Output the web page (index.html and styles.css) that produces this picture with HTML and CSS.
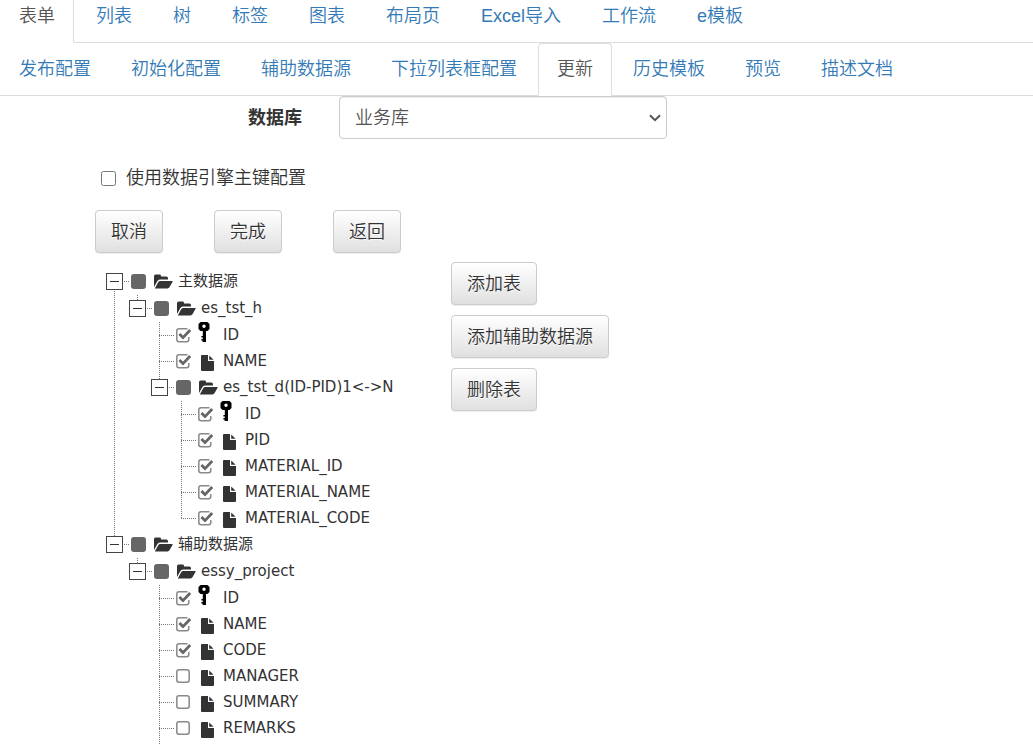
FILE: index.html
```html
<!DOCTYPE html>
<html lang="zh-CN">
<head>
    <meta charset="UTF-8">
    <meta name="viewport" content="width=device-width, initial-scale=1.0">
    <title>更新</title>
    <link rel="stylesheet" href="styles.css">
</head>
<body>
    <!-- 图标 -->
    <svg class="hidden">
        <symbol id="folder" viewBox="0 0 19 15">
            <path d="M0 13V2.2Q0 .6 1.6 .6H5.6Q7 .6 7 2V2.6H12.4Q14 2.6 14 4.2V5.4H6.4Q4.6 5.4 3.6 6.8Z" fill="#333"/>
            <path d="M.8 14.4L4.2 8.2Q4.8 7 6.4 7H18.2Q19 7 18.6 7.8L15.6 13Q14.8 14.4 13.4 14.4Z" fill="#333"/>
        </symbol>
        <symbol id="file" viewBox="0 0 13 16">
            <path d="M0 1Q0 0 1 0H7V6H13V15Q13 16 12 16H1Q0 16 0 15Z" fill="#333"/>
            <path d="M8.2 .4L12.6 4.8H8.2Z" fill="#333"/>
        </symbol>
        <symbol id="key" viewBox="0 0 12 20">
            <path fill-rule="evenodd" d="M2.5 0H9.5L11.5 2V7L9.5 9H2.5L.5 7V2ZM6 2.6A1.7 1.7 0 1 0 6 6A1.7 1.7 0 1 0 6 2.6Z" fill="#000"/>
            <path d="M4.8 8H8V20H4.6V18.6H3.4V17H4.8V15.6H3.4V14H4.8Z" fill="#000"/>
        </symbol>
    </svg>

    <!-- 模板类型 -->
    <nav class="tabs tabs-main">
        <a class="active" href="#">表单</a>
        <a href="#">列表</a>
        <a href="#">树</a>
        <a href="#">标签</a>
        <a href="#">图表</a>
        <a href="#">布局页</a>
        <a href="#">Excel导入</a>
        <a href="#">工作流</a>
        <a href="#">e模板</a>
    </nav>

    <!-- 表单配置 -->
    <nav class="tabs tabs-sub">
        <a href="#">发布配置</a>
        <a href="#">初始化配置</a>
        <a href="#">辅助数据源</a>
        <a href="#">下拉列表框配置</a>
        <a class="active" href="#">更新</a>
        <a href="#">历史模板</a>
        <a href="#">预览</a>
        <a href="#">描述文档</a>
    </nav>

    <form id="updateForm">
        <div class="form-group">
            <label for="database">数据库</label>
            <select id="database" name="database">
                <option value="business">业务库</option>
            </select>
        </div>

        <div class="panel">
            <div class="checkbox">
                <input type="checkbox" id="use_engine_key" name="use_engine_key">
                <label for="use_engine_key">使用数据引擎主键配置</label>
            </div>

            <div class="actions">
                <button class="btn" type="button">取消</button>
                <button class="btn" type="button">完成</button>
                <button class="btn" type="button">返回</button>
            </div>

            <div class="source">
                <!-- 数据源树 -->
                <ul class="tree">
                    <li>
                        <div class="node"><button class="toggle" type="button" aria-label="折叠"></button><input type="checkbox" class="partial" id="n1"><svg class="folder"><use href="#folder"/></svg><label for="n1">主数据源</label></div>
                        <ul>
                            <li>
                                <div class="node"><button class="toggle" type="button" aria-label="折叠"></button><input type="checkbox" class="partial" id="n2"><svg class="folder"><use href="#folder"/></svg><label for="n2">es_tst_h</label></div>
                                <ul>
                                    <li><div class="node"><input type="checkbox" id="n3" checked><svg class="key"><use href="#key"/></svg><label for="n3">ID</label></div></li>
                                    <li><div class="node"><input type="checkbox" id="n4" checked><svg class="file"><use href="#file"/></svg><label for="n4">NAME</label></div></li>
                                    <li>
                                        <div class="node"><button class="toggle" type="button" aria-label="折叠"></button><input type="checkbox" class="partial" id="n5"><svg class="folder"><use href="#folder"/></svg><label for="n5">es_tst_d(ID-PID)1&lt;-&gt;N</label></div>
                                        <ul>
                                            <li><div class="node"><input type="checkbox" id="n6" checked><svg class="key"><use href="#key"/></svg><label for="n6">ID</label></div></li>
                                            <li><div class="node"><input type="checkbox" id="n7" checked><svg class="file"><use href="#file"/></svg><label for="n7">PID</label></div></li>
                                            <li><div class="node"><input type="checkbox" id="n8" checked><svg class="file"><use href="#file"/></svg><label for="n8">MATERIAL_ID</label></div></li>
                                            <li><div class="node"><input type="checkbox" id="n9" checked><svg class="file"><use href="#file"/></svg><label for="n9">MATERIAL_NAME</label></div></li>
                                            <li><div class="node"><input type="checkbox" id="n10" checked><svg class="file"><use href="#file"/></svg><label for="n10">MATERIAL_CODE</label></div></li>
                                        </ul>
                                    </li>
                                </ul>
                            </li>
                        </ul>
                    </li>
                    <li>
                        <div class="node"><button class="toggle" type="button" aria-label="折叠"></button><input type="checkbox" class="partial" id="n11"><svg class="folder"><use href="#folder"/></svg><label for="n11">辅助数据源</label></div>
                        <ul>
                            <li>
                                <div class="node"><button class="toggle" type="button" aria-label="折叠"></button><input type="checkbox" class="partial" id="n12"><svg class="folder"><use href="#folder"/></svg><label for="n12">essy_project</label></div>
                                <ul class="open-end">
                                    <li><div class="node"><input type="checkbox" id="n13" checked><svg class="key"><use href="#key"/></svg><label for="n13">ID</label></div></li>
                                    <li><div class="node"><input type="checkbox" id="n14" checked><svg class="file"><use href="#file"/></svg><label for="n14">NAME</label></div></li>
                                    <li><div class="node"><input type="checkbox" id="n15" checked><svg class="file"><use href="#file"/></svg><label for="n15">CODE</label></div></li>
                                    <li><div class="node"><input type="checkbox" id="n16"><svg class="file"><use href="#file"/></svg><label for="n16">MANAGER</label></div></li>
                                    <li><div class="node"><input type="checkbox" id="n17"><svg class="file"><use href="#file"/></svg><label for="n17">SUMMARY</label></div></li>
                                    <li><div class="node"><input type="checkbox" id="n18"><svg class="file"><use href="#file"/></svg><label for="n18">REMARKS</label></div></li>
                                </ul>
                            </li>
                        </ul>
                    </li>
                </ul>

                <div class="source-actions">
                    <button class="btn" type="button">添加表</button>
                    <button class="btn" type="button">添加辅助数据源</button>
                    <button class="btn" type="button">删除表</button>
                </div>
            </div>
        </div>
    </form>
</body>
</html>
```
FILE: styles.css
```css
* {
    box-sizing: border-box;
}
body {
    margin: 0;
    font-family: "Liberation Sans", Arial, "Noto Sans CJK SC", sans-serif;
    font-size: 18px;
    line-height: 26px;
    color: #333;
    background-color: #fff;
}
button, select, input {
    font: inherit;
    color: inherit;
    margin: 0;
}
.hidden {
    display: none;
}

/* 标签页 */
.tabs {
    display: flex;
    border-bottom: 1px solid #ddd;
}
.tabs a {
    margin: 0 2px -1px 0;
    padding: 12px 18px 13px;
    border: 1px solid transparent;
    border-radius: 4px 4px 0 0;
    color: #337ab7;
    font-weight: 350;
    text-decoration: none;
    white-space: nowrap;
}
.tabs a:first-child {
    padding-left: 19px;
    border-left: none;
}
.tabs a.active {
    color: #555;
    background-color: #fff;
    border-color: #ddd;
    border-bottom-color: #fff;
}
.tabs-main a {
    margin-right: 3px;
    padding-top: 3px;
    border-top: none;
    border-radius: 0;
}

/* 数据库 */
.form-group {
    display: flex;
    align-items: center;
    gap: 37px;
}
.form-group label {
    width: 302px;
    text-align: right;
    font-weight: bold;
}
.form-group select {
    flex: 1;
    max-width: 328px;
    height: 43px;
    padding: 0 15px;
    appearance: none;
    border: 1px solid #ccc;
    border-radius: 4px;
    background: #fff url("data:image/svg+xml,%3Csvg xmlns='http://www.w3.org/2000/svg' viewBox='0 0 12 8'%3E%3Cpath d='M1 1.2L6 6.2L11 1.2' fill='none' stroke='%23555' stroke-width='2'/%3E%3C/svg%3E") right 5px center / 12px 8px no-repeat;
    box-shadow: inset 0 1px 1px rgba(0, 0, 0, 0.075);
    color: #555;
    font-weight: 350;
}

.panel {
    padding-left: 95px;
    font-weight: 350;
}
.checkbox {
    display: flex;
    align-items: center;
    gap: 10px;
    padding: 26px 6px 19px;
}
.checkbox input {
    width: 15px;
    height: 15px;
}

/* 按钮 */
.btn {
    height: 43px;
    padding: 0 15px;
    border: 1px solid #ccc;
    border-radius: 4px;
    background-image: linear-gradient(#fff, #e0e0e0);
    box-shadow: 0 1px 1px rgba(0, 0, 0, 0.075);
    text-shadow: 0 1px 0 #fff;
    font-weight: 350;
    cursor: pointer;
}
.btn:hover {
    background-image: none;
    background-color: #e0e0e0;
}
.actions {
    display: flex;
    gap: 51px;
}
.source {
    display: flex;
    margin-top: 9px;
}
.source-actions {
    display: flex;
    flex-direction: column;
    align-items: flex-start;
    gap: 10px;
}

/* 数据源树 */
.tree {
    width: 356px;
    padding: 6px 0 0 9px;
    font-family: "DejaVu Sans", Verdana, "Noto Sans CJK SC", sans-serif;
    font-size: 15px;
    font-weight: 400;
}
.tree, .tree ul {
    margin: 0;
    list-style: none;
}
.tree ul {
    padding: 1px 0 0 22px;
}
.tree > li > ul {
    padding-left: 23px;
}
.tree li {
    background: repeating-linear-gradient(#777 0 1px, transparent 1px 2px) 10px 0 / 1px 100% no-repeat;
}
.tree > li:first-child {
    background-position: 10px 13px;
}
.tree li:last-child {
    background-size: 1px 13px;
}
.tree .open-end li:last-child {
    padding-bottom: 4px;
    background-size: 1px 100%;
}
.node {
    display: flex;
    align-items: center;
    height: 26px;
    padding-left: 27px;
    background: repeating-linear-gradient(to right, #777 0 1px, transparent 1px 2px) 10px 13px / 15px 1px no-repeat;
}
.toggle {
    display: flex;
    align-items: center;
    justify-content: center;
    width: 17px;
    height: 17px;
    margin: 0 8px 0 -25px;
    padding: 0;
    border: 1px solid #444;
    background-color: #fff;
}
.toggle::before {
    content: "";
    width: 9px;
    height: 1px;
    background-color: #333;
}
.node input {
    appearance: none;
    width: 15px;
    height: 15px;
    background: url("data:image/svg+xml,%3Csvg xmlns='http://www.w3.org/2000/svg' viewBox='0 0 15 15'%3E%3Crect x='.8' y='.8' width='12.4' height='12.4' rx='2.2' fill='none' stroke='%23888' stroke-width='1.5'/%3E%3C/svg%3E");
}
.node input:checked {
    background: url("data:image/svg+xml,%3Csvg xmlns='http://www.w3.org/2000/svg' viewBox='0 0 15 15'%3E%3Cpath d='M11.5 .8H3Q.8 .8 .8 3V11.6Q.8 13.8 3 13.8H10.6Q12.8 13.8 12.8 11.6V9' fill='none' stroke='%23888' stroke-width='1.5'/%3E%3Cpath d='M3.4 6L7 9.6L14.2 2' fill='none' stroke='%23666' stroke-width='2.8'/%3E%3C/svg%3E");
}
.node input.partial {
    border-radius: 3px;
    background: #666;
}
.node label {
    padding-left: 5px;
    white-space: nowrap;
}
.node svg {
    flex: none;
}
.folder {
    width: 19px;
    height: 15px;
    margin-left: 8px;
}
.file {
    width: 13px;
    height: 16px;
    margin: 3px 4px 0 10px;
}
.key {
    width: 12px;
    height: 20px;
    margin: 0 8px 6px 7px;
}
```
